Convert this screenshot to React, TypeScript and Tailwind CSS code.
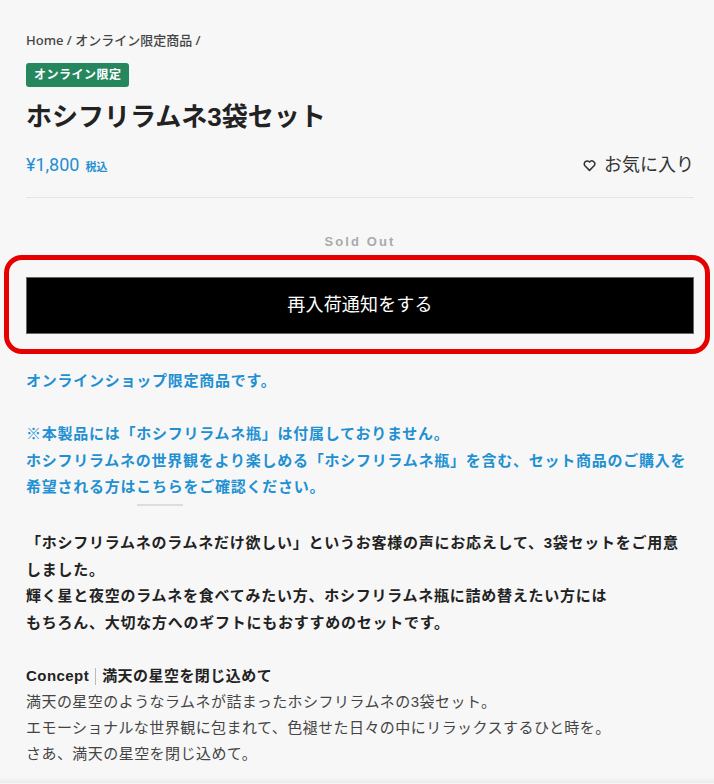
const jp = { fontFamily: '"Liberation Sans", "Noto Sans CJK JP", sans-serif' };

export default function App() {
  return (
    <div className="min-h-[784px] bg-[#f7f7f7] text-[#333]" style={jp}>
      <div className="pl-[26px] pr-[20px] pt-[31px]">
        <nav className="text-[13px] font-medium leading-[18px] text-[#444]" style={{ fontFamily: '"Noto Sans", "Noto Sans CJK JP", sans-serif' }}>
          Home / オンライン限定商品 /
        </nav>

        <div className="mt-[14px] flex">
          <span className="rounded-[3px] bg-[#26875f] px-[8px] py-[3px] text-[12px] font-bold leading-[18px] tracking-[0.04em] text-white">
            オンライン限定
          </span>
        </div>

        <h1 className="mt-[14px] text-[26px] font-bold leading-[32px] text-[#222]">ホシフリラムネ3袋セット</h1>

        <div className="mt-[21px] flex items-center justify-between">
          <div className="flex items-baseline gap-[6px] text-[#1f90d2]">
            <span className="text-[18px] leading-[22px]" style={{ fontFamily: 'Roboto, "Noto Sans CJK JP", sans-serif' }}>¥1,800</span>
            <span className="text-[11px] font-bold">税込</span>
          </div>
          <button className="flex items-center gap-[8px] text-[18px] leading-[22px] text-[#333]">
            <svg viewBox="0 0 24 24" className="h-[13px] w-[13px]" fill="none" stroke="currentColor" strokeWidth={2.8} strokeLinejoin="round">
              <path d="M12 21 3.5 12.3A5 5 0 0 1 12 5.6a5 5 0 0 1 8.5 6.7Z" />
            </svg>
            お気に入り
          </button>
        </div>

        <div className="mt-[21px] h-px bg-[#e4e4e4]" />

        <p className="mt-[36px] text-center text-[13px] font-bold leading-[16px] tracking-[0.16em] text-[#aaa]">Sold Out</p>

        <div className="relative mt-[27px]">
          <div className="pointer-events-none absolute -bottom-[20px] -left-[22px] -right-[16px] -top-[22px] rounded-[18px] border-[5px] border-[#e60000]" />
          <button className="flex h-[57px] w-full items-center justify-center border border-[#666] bg-black text-[18px] tracking-[0.01em] text-white">
            再入荷通知をする
          </button>
        </div>

        <div className="mt-[34px] text-[15px] font-bold leading-[26.5px] tracking-[0.05em] text-[#1f90d2]">
          <p>オンラインショップ限定商品です。</p>
          <p className="mt-[26.5px]">※本製品には「ホシフリラムネ瓶」は付属しておりません。</p>
          <p>
            ホシフリラムネの世界観をより楽しめる「ホシフリラムネ瓶」を含む、セット商品のご購入を
            <br />
            希望される方は<span className="relative">こちら<span className="absolute left-[1px] top-[26px] h-[2px] w-[46px] bg-[#ddd]" /></span>をご確認ください。
          </p>
        </div>

        <div className="mt-[29.5px] text-[15px] font-bold leading-[26.5px] tracking-[0.05em] text-[#222]">
          <p>
            「ホシフリラムネのラムネだけ欲しい」というお客様の声にお応えして、3袋セットをご用意
            <br />
            しました。
          </p>
          <p>
            輝く星と夜空のラムネを食べてみたい方、ホシフリラムネ瓶に詰め替えたい方には
            <br />
            もちろん、大切な方へのギフトにもおすすめのセットです。
          </p>
        </div>

        <div className="mt-[27px] text-[15px] leading-[26px] tracking-[0.03em] text-[#444]">
          <p className="flex items-center font-bold text-[#222]">
            Concept
            <span className="mx-[6px] inline-block h-[17px] w-px bg-[#bbb]" />
            満天の星空を閉じ込めて
          </p>
          <p>満天の星空のようなラムネが詰まったホシフリラムネの3袋セット。</p>
          <p>エモーショナルな世界観に包まれて、色褪せた日々の中にリラックスするひと時を。</p>
          <p>さあ、満天の星空を閉じ込めて。</p>
        </div>
      </div>
      <div className="mt-[10px] h-[6px] bg-gradient-to-b from-[#f7f7f7] to-[#ececec]" />
    </div>
  );
}
